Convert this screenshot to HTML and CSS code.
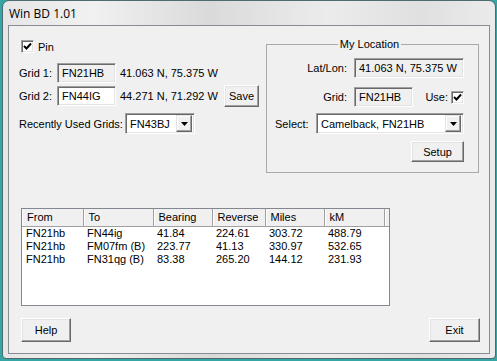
FILE: index.html
```html
<!DOCTYPE html>
<html lang="en">
<head>
    <meta charset="UTF-8">
    <meta name="viewport" content="width=device-width, initial-scale=1.0">
    <title>Win BD 1.01</title>
    <link rel="stylesheet" href="styles.css">
</head>
<body>
    <div class="window">
        <div class="frame">
            <div class="titlebar">Win BD 1.01</div>
            <div class="client">
                <div class="top">
                    <div class="grids">
                        <div class="pin-row">
                            <span class="checkbox">
                                <svg width="9" height="9" viewBox="0 0 9 9"><path d="M1 4 L3.5 6.5 L8 1.5" stroke="#000" stroke-width="2" fill="none"/></svg>
                            </span>
                            <span>Pin</span>
                        </div>
                        <div class="grid-row">
                            <span class="grid-label">Grid 1:</span>
                            <span class="field readonly grid-field">FN21HB</span>
                            <span class="coords">41.063 N, 75.375 W</span>
                        </div>
                        <div class="grid-row">
                            <span class="grid-label">Grid 2:</span>
                            <span class="field grid-field">FN44IG</span>
                            <span class="coords">44.271 N, 71.292 W</span>
                            <button class="btn save-btn">Save</button>
                        </div>
                        <div class="recent-row">
                            <span class="recent-label">Recently Used Grids:</span>
                            <div class="combo recent-combo">
                                <span class="combo-text">FN43BJ</span>
                                <span class="combo-btn">
                                    <svg width="7" height="4" viewBox="0 0 7 4"><path d="M0 0 H7 L3.5 4 Z" fill="#000"/></svg>
                                </span>
                            </div>
                        </div>
                    </div>

                    <fieldset class="location">
                        <legend>My Location</legend>
                        <div class="loc-grid">
                            <span class="loc-label">Lat/Lon:</span>
                            <span class="field readonly latlon-field">41.063 N, 75.375 W</span>
                            <span class="loc-label">Grid:</span>
                            <div class="loc-grid-row">
                                <span class="field readonly loc-grid-field">FN21HB</span>
                                <span class="use-label">Use:</span>
                                <span class="checkbox">
                                    <svg width="9" height="9" viewBox="0 0 9 9"><path d="M1 4 L3.5 6.5 L8 1.5" stroke="#000" stroke-width="2" fill="none"/></svg>
                                </span>
                            </div>
                        </div>
                        <div class="select-row">
                            <span>Select:</span>
                            <div class="combo select-combo">
                                <span class="combo-text">Camelback, FN21HB</span>
                                <span class="combo-btn">
                                    <svg width="7" height="4" viewBox="0 0 7 4"><path d="M0 0 H7 L3.5 4 Z" fill="#000"/></svg>
                                </span>
                            </div>
                        </div>
                        <div class="setup-row">
                            <button class="btn setup-btn">Setup</button>
                        </div>
                    </fieldset>
                </div>

                <div class="listview">
                    <table>
                        <colgroup>
                            <col style="width: 61px">
                            <col style="width: 70px">
                            <col style="width: 59px">
                            <col style="width: 53px">
                            <col style="width: 59px">
                            <col style="width: 60px">
                            <col>
                        </colgroup>
                        <thead>
                            <tr><th>From</th><th>To</th><th>Bearing</th><th>Reverse</th><th>Miles</th><th>kM</th><th class="filler"></th></tr>
                        </thead>
                        <tbody>
                            <tr><td>FN21hb</td><td>FN44ig</td><td>41.84</td><td>224.61</td><td>303.72</td><td>488.79</td><td></td></tr>
                            <tr><td>FN21hb</td><td>FM07fm (B)</td><td>223.77</td><td>41.13</td><td>330.97</td><td>532.65</td><td></td></tr>
                            <tr><td>FN21hb</td><td>FN31qg (B)</td><td>83.38</td><td>265.20</td><td>144.12</td><td>231.93</td><td></td></tr>
                        </tbody>
                    </table>
                </div>

                <div class="bottom-row">
                    <button class="btn help-btn">Help</button>
                    <button class="btn exit-btn">Exit</button>
                </div>
            </div>
        </div>
    </div>
</body>
</html>
```

FILE: styles.css
```css
* {
    margin: 0;
    padding: 0;
    box-sizing: border-box;
}

body {
    width: 497px;
    height: 361px;
    overflow: hidden;
    font-family: "Liberation Sans", Arial, sans-serif;
    font-size: 11px;
    color: #000;
    background: #35a6a4;
}

.window {
    width: 497px;
    height: 361px;
    padding: 0 1px 2px 2px;
}

.frame {
    width: 494px;
    height: 359px;
    border: 1px solid #4e6a72;
    border-radius: 7px 7px 4px 4px;
    padding: 0 5px 4px 5px;
    background: linear-gradient(90deg, #e6e6e6 0%, #f1f1f1 18%, #dadada 42%, #ececec 66%, #e0e0e0 85%, #ebebeb 100%);
}

.titlebar {
    height: 24px;
    display: flex;
    align-items: center;
    padding-left: 1px;
    font-family: "Open Sans", "Noto Sans", sans-serif;
    font-size: 12px;
}

.client {
    height: 329px;
    border: 1px solid #878c92;
    background: #f0f0f0;
    padding: 12px 10px 0 10px;
}

.top {
    display: flex;
    align-items: flex-start;
}

.grids {
    width: 247px;
}

/* sunken controls */
.field {
    display: flex;
    align-items: center;
    height: 20px;
    padding-left: 4px;
    background: #fff;
    border: 1px solid;
    border-color: #a0a0a0 #fff #fff #a0a0a0;
    box-shadow: inset 1px 1px #696969, inset -1px -1px #e3e3e3;
    white-space: nowrap;
}

.field.readonly {
    background: #f0f0f0;
}

.checkbox {
    display: flex;
    align-items: center;
    justify-content: center;
    width: 13px;
    height: 13px;
    background: #fff;
    border: 1px solid;
    border-color: #a0a0a0 #fff #fff #a0a0a0;
    box-shadow: inset 1px 1px #696969, inset -1px -1px #e3e3e3;
}

.btn {
    display: flex;
    align-items: center;
    justify-content: center;
    font-family: inherit;
    font-size: 11px;
    color: #000;
    background: #f0f0f0;
    border: 1px solid;
    border-color: #fff #696969 #696969 #fff;
    box-shadow: inset -1px -1px #a0a0a0, inset 1px 1px #e3e3e3;
}

.combo {
    display: flex;
    align-items: center;
    height: 21px;
    background: #fff;
    border: 1px solid;
    border-color: #a0a0a0 #fff #fff #a0a0a0;
    box-shadow: inset 1px 1px #696969, inset -1px -1px #e3e3e3;
    padding: 2px 2px 2px 4px;
}

.combo-text {
    flex: 1;
    white-space: nowrap;
}

.combo-btn {
    display: flex;
    align-items: center;
    justify-content: center;
    width: 16px;
    height: 17px;
    background: #f0f0f0;
    border: 1px solid;
    border-color: #e3e3e3 #696969 #696969 #e3e3e3;
    box-shadow: inset -1px -1px #a0a0a0, inset 1px 1px #fff;
}

/* left side */
.pin-row {
    display: flex;
    align-items: center;
    gap: 4px;
    height: 13px;
    margin: 2px 0 0 2px;
}

.grid-row {
    display: flex;
    align-items: center;
    height: 22px;
    margin-top: 9px;
}

.grid-row + .grid-row {
    margin-top: 1px;
}

.grid-label {
    width: 38px;
}

.grid-field {
    width: 59px;
}

.coords {
    width: 104px;
    margin-left: 4px;
    white-space: nowrap;
}

.save-btn {
    width: 35px;
    height: 22px;
}

.recent-row {
    display: flex;
    align-items: center;
    margin-top: 6px;
}

.recent-label {
    width: 106px;
}

.recent-combo {
    width: 70px;
}

/* my location group */
.location {
    width: 213px;
    height: 135px;
    border: 1px solid #a9a9a9;
    padding: 7px 14px 10px 8px;
}

.location legend {
    margin: 0 auto;
    padding: 0 2px;
    line-height: 13px;
}

.loc-grid {
    display: grid;
    grid-template-columns: 72px 1fr;
    column-gap: 7px;
    row-gap: 9px;
    align-items: center;
}

.loc-label {
    text-align: right;
}

.latlon-field {
    width: 110px;
}

.loc-grid-row {
    display: flex;
    align-items: center;
}

.loc-grid-field {
    width: 59px;
}

.use-label {
    margin-left: auto;
    margin-right: 3px;
}

.select-row {
    display: flex;
    align-items: center;
    margin-top: 6px;
}

.select-combo {
    width: 148px;
    margin-left: auto;
}

.setup-row {
    display: flex;
    justify-content: flex-end;
    margin-top: 7px;
}

.setup-btn {
    width: 53px;
    height: 21px;
}

/* results list */
.listview {
    width: 369px;
    height: 98px;
    margin: 35px 0 0 2px;
    background: #fff;
    border: 1px solid #828790;
    overflow: hidden;
}

.listview table {
    width: 100%;
    table-layout: fixed;
    border-collapse: collapse;
}

.listview th {
    height: 17px;
    padding-left: 5px;
    font-weight: normal;
    text-align: left;
    background: #f0f0f0;
    border-right: 1px solid #a0a0a0;
    border-bottom: 1px solid #a0a0a0;
    box-shadow: inset 1px 0 #fff;
}

.listview th.filler {
    border-right: none;
}

.listview td {
    height: 13px;
    padding-left: 4px;
    line-height: 13px;
    white-space: nowrap;
}

.bottom-row {
    display: flex;
    justify-content: space-between;
    margin: 12px -1px 0 2px;
}

.help-btn {
    width: 50px;
    height: 24px;
}

.exit-btn {
    width: 51px;
    height: 24px;
}
```
